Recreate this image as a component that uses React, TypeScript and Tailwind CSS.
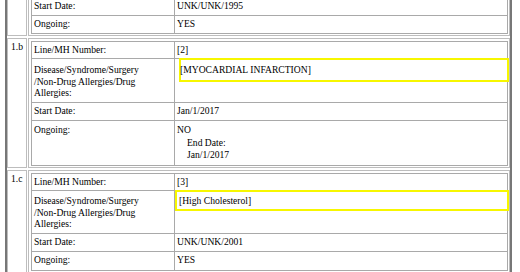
import type { ReactNode } from 'react'

type RowProps = {
  label: string[]
  children: ReactNode
  height: string
  labelPad?: string
  valuePad?: string
  last?: boolean
}

function InfoRow({ label, children, height, labelPad = 'pt-[2px]', valuePad = 'pt-[2px]', last }: RowProps) {
  return (
    <div className={`flex ${height} ${last ? '' : 'border-b border-[#a9a9a9]'}`}>
      <div className={`w-[143px] shrink-0 border-r border-[#a9a9a9] pl-[2px] ${labelPad}`}>
        {label.map((line) => (
          <div key={line} className="whitespace-nowrap">
            {line}
          </div>
        ))}
      </div>
      <div className={`min-w-0 flex-1 pl-[2px] ${valuePad}`}>{children}</div>
    </div>
  )
}

function Section({ num, children }: { num?: string; children: ReactNode }) {
  return (
    <div className="flex gap-[1px]">
      <div className="w-[20px] shrink-0 border border-[#bdbdbd] pl-[3px] pt-[2px]">{num}</div>
      <div className="min-w-0 flex-1 border border-[#bdbdbd] pb-[1px] pl-[2px] pr-[1px] pt-[2px]">
        <div className="border border-[#a9a9a9]">{children}</div>
      </div>
    </div>
  )
}

const diseaseLabel = ['Disease/Syndrome/Surgery', '/Non-Drug Allergies/Drug', 'Allergies:']

export default function App() {
  return (
    <div className="h-[272px] w-[520px] overflow-hidden bg-white font-['Liberation_Serif','Times_New_Roman',serif] text-[9.6px] leading-[12px] text-black">
      <div className="-mt-[6px] ml-[5px] flex w-[507px] flex-col gap-[2px] border-x-2 border-[#777777]">
        {/* 1.a continues from above the crop */}
        <Section>
          <InfoRow label={['Start Date:']} height="h-[18px]">
            UNK/UNK/1995
          </InfoRow>
          <InfoRow label={['Ongoing:']} height="h-[17px]" last>
            YES
          </InfoRow>
        </Section>

        <Section num="1.b">
          <InfoRow label={['Line/MH Number:']} height="h-[17px]">
            [2]
          </InfoRow>
          <InfoRow label={diseaseLabel} height="h-[44px]" labelPad="pt-[5px] leading-[11.5px]" valuePad="pt-0">
            <div className="-mt-[1px] ml-[2px] flex h-[24px] w-[330px] items-center whitespace-nowrap border-2 border-[#f7f700]">
              <span className="-ml-[1px]">[MYOCARDIAL INFARCTION]</span>
            </div>
          </InfoRow>
          <InfoRow label={['Start Date:']} height="h-[18px]">
            Jan/1/2017
          </InfoRow>
          <InfoRow label={['Ongoing:']} height="h-[44px]" labelPad="pt-[3px]" valuePad="pt-[3px] leading-[12.5px]" last>
            <div>NO</div>
            <div className="pl-[10px]">
              <div>End Date:</div>
              <div>Jan/1/2017</div>
            </div>
          </InfoRow>
        </Section>

        <Section num="1.c">
          <InfoRow label={['Line/MH Number:']} height="h-[17px]">
            [3]
          </InfoRow>
          <InfoRow label={diseaseLabel} height="h-[43px]" labelPad="pt-[4px] leading-[11.5px]" valuePad="pt-0">
            <div className="-ml-[2px] -mt-[1px] flex h-[21px] w-[334px] items-center whitespace-nowrap border-2 border-[#f7f700] pl-[2px]">
              [High Cholesterol]
            </div>
          </InfoRow>
          <InfoRow label={['Start Date:']} height="h-[18px]">
            UNK/UNK/2001
          </InfoRow>
          <InfoRow label={['Ongoing:']} height="h-[18px]" last>
            YES
          </InfoRow>
        </Section>
      </div>
    </div>
  )
}
